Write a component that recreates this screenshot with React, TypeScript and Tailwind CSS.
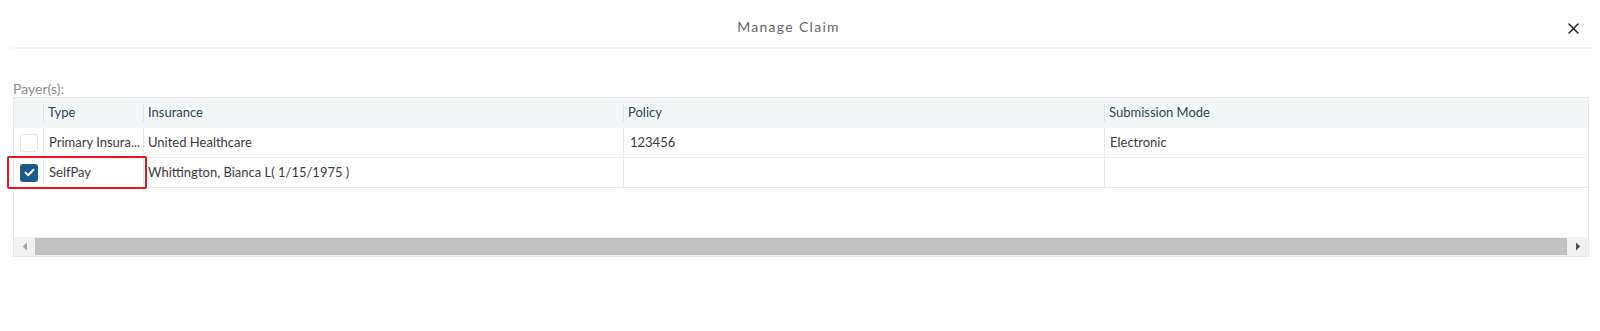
import React from "react";

const font = { fontFamily: "Lato, 'Noto Sans', 'Liberation Sans', sans-serif" };

function CheckBox({ checked }: { checked: boolean }) {
  if (checked) {
    return (
      <div className="w-[18px] h-[18px] rounded-[3px] bg-[#1b5b8c] flex items-center justify-center">
        <svg width="11" height="9" viewBox="0 0 11 9" fill="none">
          <path d="M1.5 4.6 L4.2 7.2 L9.5 1.8" stroke="#ffffff" strokeWidth="2" strokeLinecap="round" strokeLinejoin="round" />
        </svg>
      </div>
    );
  }
  return <div className="w-[18px] h-[18px] rounded-[3px] bg-white border border-[#e2e2e2]" />;
}

function HeaderCell({ label, first }: { label?: string; first?: boolean }) {
  return (
    <div className="flex items-center h-full">
      {!first && <div className="w-px h-[18px] bg-[#dde2e5]" />}
      {label && <span className="pl-[4px] text-[13px] text-[#2f4555]">{label}</span>}
    </div>
  );
}

function BodyRow({ checked, type, insurance, policy, mode }: { checked: boolean; type: string; insurance: string; policy: string; mode: string }) {
  return (
    <div className="grid grid-cols-[29px_100px_480px_481px_1fr] h-[30px] border-b border-[#e8e8e8] text-[13px] text-[#3a3a3a]">
      <div className="flex items-center justify-center pl-px">
        <CheckBox checked={checked} />
      </div>
      <div className="flex items-center border-l border-[#e8e8e8] pl-[5px] whitespace-nowrap overflow-hidden">{type}</div>
      <div className="flex items-center border-l border-[#e8e8e8] pl-[4px] whitespace-nowrap">{insurance}</div>
      <div className="flex items-center border-l border-[#e8e8e8] pl-[6px]">{policy}</div>
      <div className="flex items-center border-l border-[#e8e8e8] pl-[5px]">{mode}</div>
    </div>
  );
}

export default function App() {
  return (
    <div className="relative w-[1600px] h-[331px] bg-white" style={font}>
      <div className="px-[9px] pr-[7px]">
        <div className="flex items-center h-[49px] border-b-2 border-[#f1f1f1]">
          <div className="flex-1 text-center text-[14px] tracking-[1.3px] text-[#666666] pt-[6px]">Manage Claim</div>
          <div className="w-[25px] flex items-center justify-start pt-[9px]">
            <svg width="11" height="11" viewBox="0 0 11 11">
              <path d="M1 1 L10 10 M10 1 L1 10" stroke="#222222" strokeWidth="1.5" strokeLinecap="round" />
            </svg>
          </div>
        </div>
      </div>

      <div className="pl-[13px] pt-[31px]">
        <div className="h-[17px] leading-[17px] text-[14px] text-[#8c8c8c]">Payer(s):</div>
        <div className="w-[1576px] border border-[#e6e6e6]">
          <div className="grid grid-cols-[29px_100px_480px_481px_1fr] h-[30px] bg-[#f3f6f7]">
            <HeaderCell first />
            <HeaderCell label="Type" />
            <HeaderCell label="Insurance" />
            <HeaderCell label="Policy" />
            <HeaderCell label="Submission Mode" />
          </div>
          <BodyRow checked={false} type="Primary Insura..." insurance="United Healthcare" policy="123456" mode="Electronic" />
          <BodyRow checked={true} type="SelfPay" insurance="Whittington, Bianca L( 1/15/1975 )" policy="" mode="" />
          <div className="h-[49px]" />
          <div className="flex h-[19px] bg-[#f1f1f1]">
            <div className="w-[21px] flex items-center justify-center">
              <svg width="6" height="9" viewBox="0 0 6 9">
                <path d="M5 0.5 L0.8 4.5 L5 8.5 Z" fill="#a3a3a3" />
              </svg>
            </div>
            <div className="flex-1 bg-[#c1c1c1] my-px" />
            <div className="w-[21px] flex items-center justify-center">
              <svg width="6" height="9" viewBox="0 0 6 9">
                <path d="M1 0.5 L5.2 4.5 L1 8.5 Z" fill="#505050" />
              </svg>
            </div>
          </div>
        </div>
      </div>

      <div className="absolute left-[7px] top-[156px] w-[140px] h-[33px] border-2 border-[#e3161d] rounded-[2px] pointer-events-none" />
    </div>
  );
}
